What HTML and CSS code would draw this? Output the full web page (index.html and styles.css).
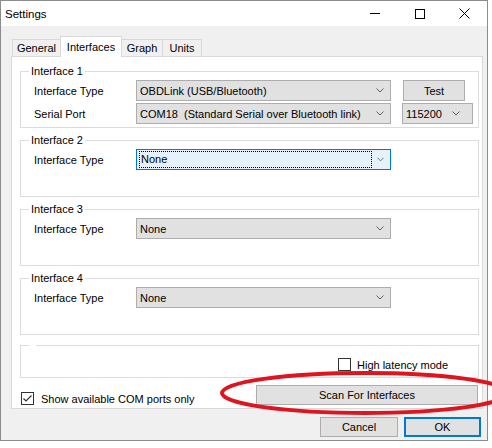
FILE: index.html
```html
<!DOCTYPE html>
<html>
<head>
<meta charset="utf-8">
<title>Settings</title>
<link rel="stylesheet" href="styles.css">
</head>
<body>
<div class="window">
  <div class="titlebar">
    <span class="title">Settings</span>
    <div class="caption">
      <span class="cap"><svg width="10" height="11" viewBox="0 0 10 11"><path d="M0 5.5H10" stroke="#000" stroke-width="1"/></svg></span>
      <span class="cap"><svg width="10" height="11" viewBox="0 0 10 11"><rect x="0.5" y="1.5" width="9" height="9" fill="none" stroke="#000" stroke-width="1"/></svg></span>
      <span class="cap"><svg width="11" height="11" viewBox="0 0 11 11"><path d="M0.5 0.5L10.5 10.5M10.5 0.5L0.5 10.5" stroke="#000" stroke-width="1"/></svg></span>
    </div>
  </div>
  <div class="client">
    <div class="tabs">
      <div class="tab t-general">General</div>
      <div class="tab active t-interfaces">Interfaces</div>
      <div class="tab t-graph">Graph</div>
      <div class="tab t-units">Units</div>
    </div>
    <div class="panel">
      <fieldset class="group g1">
        <legend>Interface 1</legend>
        <div class="row">
          <span class="label">Interface Type</span>
          <div class="combo wide"><span class="val">OBDLink (USB/Bluetooth)</span><svg class="chev" width="8" height="5" viewBox="0 0 8 5"><path d="M0.5 0.5L4 4L7.5 0.5" fill="none" stroke="#606060"/></svg></div>
          <button class="btn test">Test</button>
        </div>
        <div class="row row2">
          <span class="label">Serial Port</span>
          <div class="combo wide"><span class="val">COM18  (Standard Serial over Bluetooth link)</span><svg class="chev" width="8" height="5" viewBox="0 0 8 5"><path d="M0.5 0.5L4 4L7.5 0.5" fill="none" stroke="#606060"/></svg></div>
          <div class="combo baud"><span class="val">115200</span><svg class="chev" width="8" height="5" viewBox="0 0 8 5"><path d="M0.5 0.5L4 4L7.5 0.5" fill="none" stroke="#606060"/></svg></div>
        </div>
      </fieldset>
      <fieldset class="group gn">
        <legend>Interface 2</legend>
        <div class="row">
          <span class="label">Interface Type</span>
          <div class="combo wide focused"><span class="val">None</span><svg class="chev" width="8" height="5" viewBox="0 0 8 5"><path d="M0.5 0.5L4 4L7.5 0.5" fill="none" stroke="#606060"/></svg></div>
        </div>
      </fieldset>
      <fieldset class="group gn">
        <legend>Interface 3</legend>
        <div class="row">
          <span class="label">Interface Type</span>
          <div class="combo wide"><span class="val">None</span><svg class="chev" width="8" height="5" viewBox="0 0 8 5"><path d="M0.5 0.5L4 4L7.5 0.5" fill="none" stroke="#606060"/></svg></div>
        </div>
      </fieldset>
      <fieldset class="group gn">
        <legend>Interface 4</legend>
        <div class="row">
          <span class="label">Interface Type</span>
          <div class="combo wide"><span class="val">None</span><svg class="chev" width="8" height="5" viewBox="0 0 8 5"><path d="M0.5 0.5L4 4L7.5 0.5" fill="none" stroke="#606060"/></svg></div>
        </div>
      </fieldset>
      <fieldset class="group g5">
        <legend>&nbsp;</legend>
        <label class="check latency">
          <svg width="13" height="13" viewBox="0 0 13 13"><rect x="0.5" y="0.5" width="12" height="12" fill="#fff" stroke="#333"/></svg>
          <span>High latency mode</span>
        </label>
      </fieldset>
      <div class="bottom">
        <label class="check comonly">
          <svg width="13" height="13" viewBox="0 0 13 13"><rect x="0.5" y="0.5" width="12" height="12" fill="#fff" stroke="#333"/><path d="M2.5 6.5L5 9L10.5 3.5" fill="none" stroke="#333" stroke-width="1.2"/></svg>
          <span>Show available COM ports only</span>
        </label>
        <button class="btn scan">Scan For Interfaces</button>
      </div>
    </div>
    <div class="footer">
      <button class="btn cancel">Cancel</button>
      <button class="btn ok">OK</button>
    </div>
  </div>
</div>
<svg class="annot" width="492" height="448" viewBox="0 0 492 448">
  <ellipse cx="365" cy="393" rx="143" ry="20" fill="none" stroke="#e0141e" stroke-width="4"/>
</svg>
</body>
</html>
```

FILE: styles.css
```css
* { box-sizing: border-box; }
html, body { margin: 0; padding: 0; }
body {
  background: #fff;
  font-family: "Liberation Sans", Arial, sans-serif;
  font-size: 11px;
  color: #000;
  width: 492px;
  height: 448px;
  overflow: hidden;
  position: relative;
}
.window {
  width: 488px;
  height: 441px;
  border: 1px solid #8c8c8c;
  background: #f0f0f0;
  display: flex;
  flex-direction: column;
}
.titlebar {
  height: 25px;
  flex-shrink: 0;
  background: #fff;
  display: flex;
  align-items: center;
}
.title { flex: 1; padding-left: 4px; font-size: 11.5px; }
.caption { display: flex; height: 100%; }
.cap { width: 45px; display: flex; align-items: center; justify-content: center; }
.cap svg { display: block; }

.client { padding: 10px 0 0 10px; }

.tabs { display: flex; align-items: flex-end; height: 20px; margin-left: 1px; }
.tab {
  height: 17px;
  border: 1px solid #d9d9d9;
  border-bottom: none;
  background: #f0f0f0;
  display: flex;
  align-items: center;
  justify-content: center;
}
.tab + .tab { margin-left: -1px; }
.tab.active {
  height: 21px;
  margin-bottom: -1px;
  padding-bottom: 1px;
  background: #fff;
  position: relative;
  z-index: 1;
}
.t-general { width: 49px; }
.t-interfaces { width: 62px; }
.t-graph { width: 42px; }
.t-units { width: 40px; }

.panel {
  width: 472px;
  border: 1px solid #d9d9d9;
  background: #fff;
  padding: 8px 3px 3px 8px;
}

.group {
  margin: 0;
  min-width: 0;
  border: 1px solid #dcdcdc;
  padding: 2px 0 3px 0;
}
.group + .group { margin-top: 6px; }
.group legend {
  margin-left: 8px;
  padding: 0 2px;
  line-height: 13px;
  height: 13px;
}
.gn { padding-bottom: 26px; }
.g5 { margin-top: 4px !important; padding: 6px 0 6px 0; }

.row { display: flex; align-items: center; height: 21px; padding-left: 13px; }
.row2 { margin-top: 2px; }
.label { width: 102px; flex-shrink: 0; }

.combo {
  height: 21px;
  border: 1px solid #adadad;
  background: #e1e1e1;
  display: flex;
  align-items: center;
  padding-left: 3px;
  flex-shrink: 0;
}
.combo .val { flex: 1; white-space: pre; overflow: hidden; }
.combo .chev { display: block; margin-right: 6px; }
.wide { width: 255px; }
.baud { width: 71px; margin-left: 11px; }
.baud .chev { margin-right: 12px; }
.focused {
  border-color: #0078d7;
  background: #e5f1fb;
  padding: 1px 0 1px 2px;
  align-items: stretch;
}
.focused .val {
  flex: none;
  width: 233px;
  border: 1px dotted #000;
  padding-left: 1px;
  line-height: 15px;
}
.focused .chev { align-self: center; margin-left: 5px; }

.btn {
  font-family: inherit;
  font-size: 11px;
  color: #000;
  background: #e1e1e1;
  border: 1px solid #adadad;
  padding: 0;
  margin: 0;
  height: 20px;
}
.test { width: 62px; height: 21px; margin-left: 12px; }

.check { display: flex; align-items: center; height: 13px; }
.check svg { display: block; flex-shrink: 0; }
.latency { padding-left: 317px; }
.latency span { margin-left: 6px; }
.comonly { margin-left: 1px; }
.comonly span { margin-left: 7px; }

.bottom { display: flex; align-items: flex-end; margin-top: 7px; height: 20px; }
.scan { width: 222px; margin-left: auto; margin-right: 1px; }

.footer { display: flex; justify-content: flex-end; gap: 6px; padding-right: 6px; margin-top: 8px; }
.cancel { width: 78px; }
.ok { width: 77px; border-color: #0078d7; box-shadow: inset 0 0 0 1px #0078d7; }

.annot { position: absolute; left: 0; top: 0; pointer-events: none; }
```
